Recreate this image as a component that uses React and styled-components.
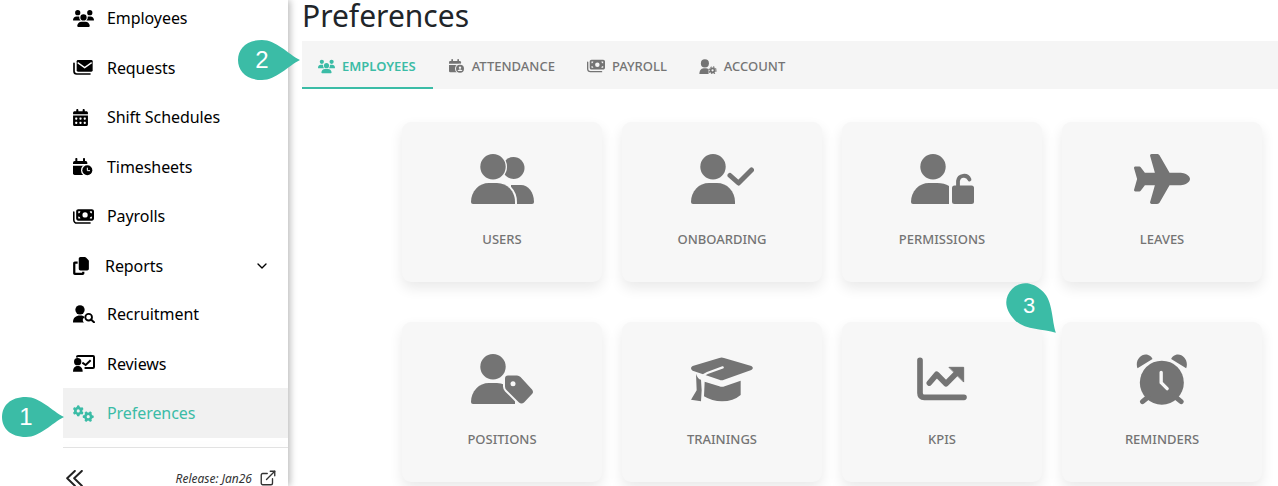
import React from "react";
import styled, { createGlobalStyle } from "styled-components";
import { FaUsers, FaCalendarDays, FaMoneyBills, FaCopy, FaGears, FaPlane } from "react-icons/fa6";
import { ChevronDown, ExternalLink } from "lucide-react";

const TEAL = "#3bbca6";
const CARD = "#f7f7f7";
const GREY = "#747474";

const Global = createGlobalStyle`
  html, body { margin: 0; padding: 0; height: 486px; overflow: hidden; background: #fff; }
  #root { height: 486px; }
  * { box-sizing: border-box; }
`;

const Page = styled.div`
  position: relative;
  display: flex;
  width: 1278px;
  height: 486px;
  overflow: hidden;
  font-family: "Noto Sans", "Liberation Sans", sans-serif;
`;

const Sidebar = styled.aside`
  flex: 0 0 288px;
  height: 486px;
  display: flex;
  flex-direction: column;
  padding-left: 63px;
  background: #fff;
  box-shadow: 2px 0 7px rgba(0, 0, 0, 0.28);
`;

const Menu = styled.nav`
  flex: 0 0 438px;
  display: flex;
  flex-direction: column;
  justify-content: flex-end;
  overflow: hidden;
`;

const Row = styled.div`
  flex: 0 0 ${(p) => p.$h || 49.5}px;
  display: flex;
  align-items: center;
  padding: ${(p) => p.$pt || 0}px 18px 0 10px;
  font-size: 16px;
  letter-spacing: -0.07px;
  color: ${(p) => (p.$active ? TEAL : "#000")};
  background: ${(p) => (p.$active ? "#f1f1f1" : "transparent")};
`;

const RowIcon = styled.span`
  flex: 0 0 ${(p) => p.$w || 34}px;
  display: flex;
  align-items: center;
  height: 22px;
  margin-left: ${(p) => p.$ox || 0}px;
`;

const RowLabel = styled.span`
  flex: 1;
`;

const Divider = styled.div`
  margin-top: 9px;
  height: 1px;
  background: #e2e2e2;
  box-shadow: 0 -3px 5px rgba(0, 0, 0, 0.05);
`;

const Footer = styled.div`
  flex: 1;
  display: flex;
  align-items: flex-end;
  justify-content: space-between;
  padding: 0 11px 0 3px;
  color: #222;
`;

const Collapse = styled.svg`
  display: block;
  margin-bottom: 0;
`;

const Release = styled.div`
  display: flex;
  align-items: center;
  gap: 7px;
  font-size: 12px;
  font-style: italic;
  color: #333;
  height: 20px;
  margin-bottom: -2px;
`;

const Main = styled.main`
  flex: 1;
  min-width: 0;
  padding-left: 14px;
`;

const Title = styled.h1`
  margin: 0;
  height: 41px;
  font-size: 30px;
  line-height: 32px;
  font-weight: 400;
  color: #212529;
`;

const TabBar = styled.div`
  display: flex;
  height: 48px;
  background: #f5f5f5;
`;

const Tab = styled.div`
  display: flex;
  align-items: center;
  gap: 7px;
  padding: 4px ${(p) => (p.$active ? 17 : 16)}px 0 16px;
  font-size: 13px;
  font-weight: ${(p) => (p.$active ? 600 : 500)};
  color: ${(p) => (p.$active ? TEAL : GREY)};
  border-bottom: 2px solid ${(p) => (p.$active ? TEAL : "transparent")};
`;

const Grid = styled.div`
  display: grid;
  grid-template-columns: repeat(4, 200px);
  grid-auto-rows: 160px;
  column-gap: 20px;
  row-gap: 40px;
  margin: 33px 0 0 100px;
`;

const Card = styled.div`
  display: flex;
  flex-direction: column;
  align-items: center;
  padding-top: 32px;
  border-radius: 9px;
  background: ${CARD};
  box-shadow: 0 6px 14px rgba(0, 0, 0, 0.09);
  color: ${GREY};
`;

const CardIcon = styled.div`
  display: flex;
  align-items: center;
  justify-content: center;
  height: 50px;
`;

const CardLabel = styled.div`
  margin-top: 26px;
  font-size: 13px;
  line-height: 18px;
  font-weight: 500;
`;

const Callout = styled.div`
  position: absolute;
  left: ${(p) => p.$x}px;
  top: ${(p) => p.$y}px;
  width: 62px;
  height: 40px;
  svg { display: block; overflow: visible; transform-origin: 24px 20px; transform: rotate(${(p) => p.$r || 0}deg); }
`;

const CalloutNum = styled.span`
  position: absolute;
  left: 0;
  top: 0;
  width: 48px;
  height: 40px;
  line-height: 40px;
  text-align: center;
  font-family: "Liberation Sans", sans-serif;
  font-size: ${(p) => p.$s || 24}px;
  color: #fff;
`;

const Note = ({ n, x, y, r, s }) => (
  <Callout $x={x} $y={y} $r={r}>
    <svg width="62" height="40" viewBox="0 0 62 40">
      <path fill={TEAL} d="M62 20C50 14 38 0 24 0 8 0 0 9 0 20s8 20 24 20c14 0 26-14 38-20Z" />
    </svg>
    <CalloutNum $s={s}>{n}</CalloutNum>
  </Callout>
);

const personBody = "M2 50Q0 50 0 48C0 37 8 29 18 29H26C36 29 44 37 44 48V50Z";

const UsersIcon = () => (
  <svg width="63" height="50" viewBox="0 0 63 50" fill={GREY}>
    <circle cx="42.5" cy="14" r="11" />
    <path d="M40 31H50C57 31 63 38 63 48Q63 50 61 50H40Z" />
    <path d={personBody} fill={CARD} stroke={CARD} strokeWidth="4" />
    <path d={personBody} />
    <circle cx="22" cy="12.7" r="14" fill={CARD} />
    <circle cx="22" cy="12.7" r="12.7" />
  </svg>
);

const CheckIcon = () => (
  <svg width="63" height="50" viewBox="0 0 63 50" fill={GREY}>
    <circle cx="22" cy="12.7" r="12.7" />
    <path d={personBody} />
    <path d="M39 21.5L47.5 29L60.5 16" fill="none" stroke={GREY} strokeWidth="5" strokeLinecap="round" strokeLinejoin="round" />
  </svg>
);

const LockIcon = () => (
  <svg width="63" height="50" viewBox="0 0 63 50" fill={GREY}>
    <circle cx="22" cy="12.7" r="12.7" />
    <path d="M2 50Q0 50 0 48C0 37 8 29 18 29H26C31 29 35 30 38 32V50Z" />
    <rect x="41" y="31.5" width="22" height="18.5" rx="2.5" />
    <path d="M47 33V27A6 6 0 0 1 58.5 25.5" fill="none" stroke={GREY} strokeWidth="3.8" strokeLinecap="round" />
  </svg>
);

const TagIcon = () => (
  <svg width="63" height="50" viewBox="0 0 63 50" fill={GREY}>
    <circle cx="22" cy="12.7" r="12.7" />
    <path d={personBody} />
    <path d="M37 21.5H46Q48 21.5 49.5 23L61 35.5Q63 38 61 40L53 48.5Q50.5 50.5 48 48.5L35.5 36Q34 34.5 34 32.5V24.5Q34 21.5 37 21.5Z" stroke={CARD} strokeWidth="4" paintOrder="stroke" />
    <circle cx="42" cy="29.7" r="2.5" fill={CARD} />
  </svg>
);

const CapIcon = () => (
  <svg width="64" height="45" viewBox="870 122 192 135" fill={GREY}>
    <path d="M958 125Q965 122 972 125L1054 149Q1063 155 1054 161L972 190Q965 193 958 190L878 163Q868 155 878 149Z" />
    <path d="M914 196L958 210Q966 213 974 210L1022 193V236Q1000 255 966 255 936 255 912 240Z" />
    <path d="M968 153L922 170Q902 178 899 198V232" fill="none" stroke={CARD} strokeWidth="7" strokeLinecap="round" />
    <path d="M888 172L890 222 873 250 903 255 905 222 903 190Q893 188 888 172Z" />
  </svg>
);

const KpiIcon = () => (
  <svg width="52" height="44" viewBox="18 20 156 132" fill="none" stroke={GREY} strokeLinecap="round" strokeLinejoin="round">
    <path d="M30 30V128Q30 141 43 141H162" strokeWidth="17" />
    <path d="M58 98L80 72L108 100L140 68" strokeWidth="17" />
    <path d="M118 51H161V94Z" fill={GREY} strokeWidth="3" />
  </svg>
);

const AlarmIcon = () => (
  <svg width="52" height="51" viewBox="889 221 155 153" fill={GREY}>
    <path d="M893 264C884 240 905 217 925 224 932 226 937 232 938 236Z" />
    <path d="M1039 264C1048 240 1027 217 1007 224 1000 226 995 232 994 236Z" />
    <circle cx="966" cy="307" r="66" />
    <path d="M925 350L908 364M1007 350L1024 364" stroke={GREY} strokeWidth="15" strokeLinecap="round" />
    <path d="M964 276V307L982 325" fill="none" stroke={CARD} strokeWidth="10" strokeLinecap="round" strokeLinejoin="round" />
  </svg>
);

const RequestsIcon = () => (
  <svg width="20" height="15" viewBox="219 180 60 45">
    <rect x="230" y="180" width="48" height="35" rx="4" fill="currentColor" />
    <path d="M233 188L254 203L275 188" fill="none" stroke="#fff" strokeWidth="4" />
    <path d="M222 190V214Q222 222 230 222H270" fill="none" stroke="currentColor" strokeWidth="5" strokeLinecap="round" />
  </svg>
);

const TimesheetIcon = () => (
  <svg width="20" height="18" viewBox="219 474 60 54" fill="currentColor">
    <path d="M224 483H257Q262 483 262 488V492H219V488Q219 483 224 483Z" />
    <rect x="226" y="474" width="6" height="12" rx="2" />
    <rect x="249" y="474" width="6" height="12" rx="2" />
    <path d="M219 497H262V525H224Q219 525 219 520Z" />
    <circle cx="262" cy="511" r="19" fill="#fff" />
    <circle cx="262" cy="511" r="15" />
    <path d="M262 503V512H270" stroke="#fff" strokeWidth="3" fill="none" />
  </svg>
);

const RecruitIcon = () => (
  <svg width="22" height="18" viewBox="219 195 66 53" fill="currentColor">
    <circle cx="240" cy="209" r="14" />
    <path d="M219 247C219 232 228 226 240 226 248 226 252 228 254 231 246 236 248 243 252 247Z" />
    <circle cx="266" cy="231" r="10" fill="none" stroke="currentColor" strokeWidth="5.5" />
    <path d="M273 238L282 246" stroke="currentColor" strokeWidth="6" strokeLinecap="round" />
  </svg>
);

const ReviewIcon = () => (
  <svg width="22" height="17" viewBox="219 346 66 51" fill="currentColor">
    <path d="M231 351Q231 349 234 349H279Q282 349 282 352V382Q282 385 279 385H256" fill="none" stroke="currentColor" strokeWidth="6" strokeLinecap="round" />
    <circle cx="233" cy="366" r="11" />
    <path d="M219 396C219 384 226 379 233 379 242 379 248 385 248 396Z" />
    <path d="M247 369L257 376L272 362" fill="none" stroke="currentColor" strokeWidth="6" />
  </svg>
);

const AttendanceIcon = () => (
  <svg width="16" height="14" viewBox="601 177 48 42" fill="currentColor">
    <path d="M605 183H633Q637 183 637 187V191H601V187Q601 183 605 183Z" />
    <rect x="608" y="177" width="5" height="9" rx="2" />
    <rect x="626" y="177" width="5" height="9" rx="2" />
    <path d="M601 195H637V217H605Q601 217 601 213Z" />
    <circle cx="634" cy="206" r="15" fill="#f5f5f5" />
    <circle cx="634" cy="206" r="12" />
    <circle cx="634" cy="203" r="3.5" fill="#f5f5f5" />
    <path d="M627 213C628 207 640 207 641 213Z" fill="#f5f5f5" />
  </svg>
);

const AccountIcon = () => (
  <svg width="18" height="15" viewBox="1292 177 47 41" fill="currentColor">
    <circle cx="1307" cy="189" r="11" />
    <path d="M1292 218C1292 205 1298 202 1307 202 1312 202 1315 203 1317 205V218Z" />
    <circle cx="1328" cy="208" r="5.5" fill="none" stroke="currentColor" strokeWidth="5" />
    <circle cx="1328" cy="208" r="9.5" fill="none" stroke="currentColor" strokeWidth="3" strokeDasharray="4 3.5" />
  </svg>
);

const menu = [
  { label: "Employees", icon: <FaUsers size={21} /> },
  { label: "Requests", icon: <RequestsIcon /> },
  { label: "Shift Schedules", icon: <FaCalendarDays size={17} />, ox: -1, w: 35 },
  { label: "Timesheets", icon: <TimesheetIcon /> },
  { label: "Payrolls", icon: <FaMoneyBills size={21} /> },
  { label: "Reports", icon: <FaCopy size={18} />, ox: -1, w: 33, chevron: true, h: 48.5, pt: 1 },
  { label: "Recruitment", icon: <RecruitIcon /> },
  { label: "Reviews", icon: <ReviewIcon />, h: 49 },
  { label: "Preferences", icon: <FaGears size={21} />, active: true, h: 50 },
];

const tabs = [
  { label: "EMPLOYEES", icon: <FaUsers size={17} />, active: true },
  { label: "ATTENDANCE", icon: <AttendanceIcon /> },
  { label: "PAYROLL", icon: <FaMoneyBills size={18} /> },
  { label: "ACCOUNT", icon: <AccountIcon /> },
];

const cards = [
  { label: "USERS", icon: <UsersIcon /> },
  { label: "ONBOARDING", icon: <CheckIcon /> },
  { label: "PERMISSIONS", icon: <LockIcon /> },
  { label: "LEAVES", icon: <FaPlane size={56} /> },
  { label: "POSITIONS", icon: <TagIcon /> },
  { label: "TRAININGS", icon: <CapIcon /> },
  { label: "KPIS", icon: <KpiIcon /> },
  { label: "REMINDERS", icon: <AlarmIcon /> },
];

export default function App() {
  return (
    <Page>
      <Global />
      <Sidebar>
        <Menu>
          {menu.map((m) => (
            <Row key={m.label} $active={m.active} $h={m.h} $pt={m.pt}>
              <RowIcon $w={m.w} $ox={m.ox}>{m.icon}</RowIcon>
              <RowLabel>{m.label}</RowLabel>
              {m.chevron && <ChevronDown size={16} />}
            </Row>
          ))}
        </Menu>
        <Divider />
        <Footer>
          <Collapse width="17" height="16" viewBox="198 688 50 48" fill="none" stroke="currentColor" strokeWidth="6" strokeLinecap="round" strokeLinejoin="round">
            <path d="M224 691L201 713L224 735M245 691L222 713L245 735" />
          </Collapse>
          <Release>
            <span>Release: Jan26</span>
            <ExternalLink size={18} strokeWidth={1.8} />
          </Release>
        </Footer>
      </Sidebar>
      <Main>
        <Title>Preferences</Title>
        <TabBar>
          {tabs.map((t) => (
            <Tab key={t.label} $active={t.active}>
              {t.icon}
              {t.label}
            </Tab>
          ))}
        </TabBar>
        <Grid>
          {cards.map((c) => (
            <Card key={c.label}>
              <CardIcon>{c.icon}</CardIcon>
              <CardLabel>{c.label}</CardLabel>
            </Card>
          ))}
        </Grid>
      </Main>
      <Note n="1" x={2} y={397} />
      <Note n="2" x={238} y={40} />
      <Note n="3" x={1005} y={286} r={45} s={22} />
    </Page>
  );
}
